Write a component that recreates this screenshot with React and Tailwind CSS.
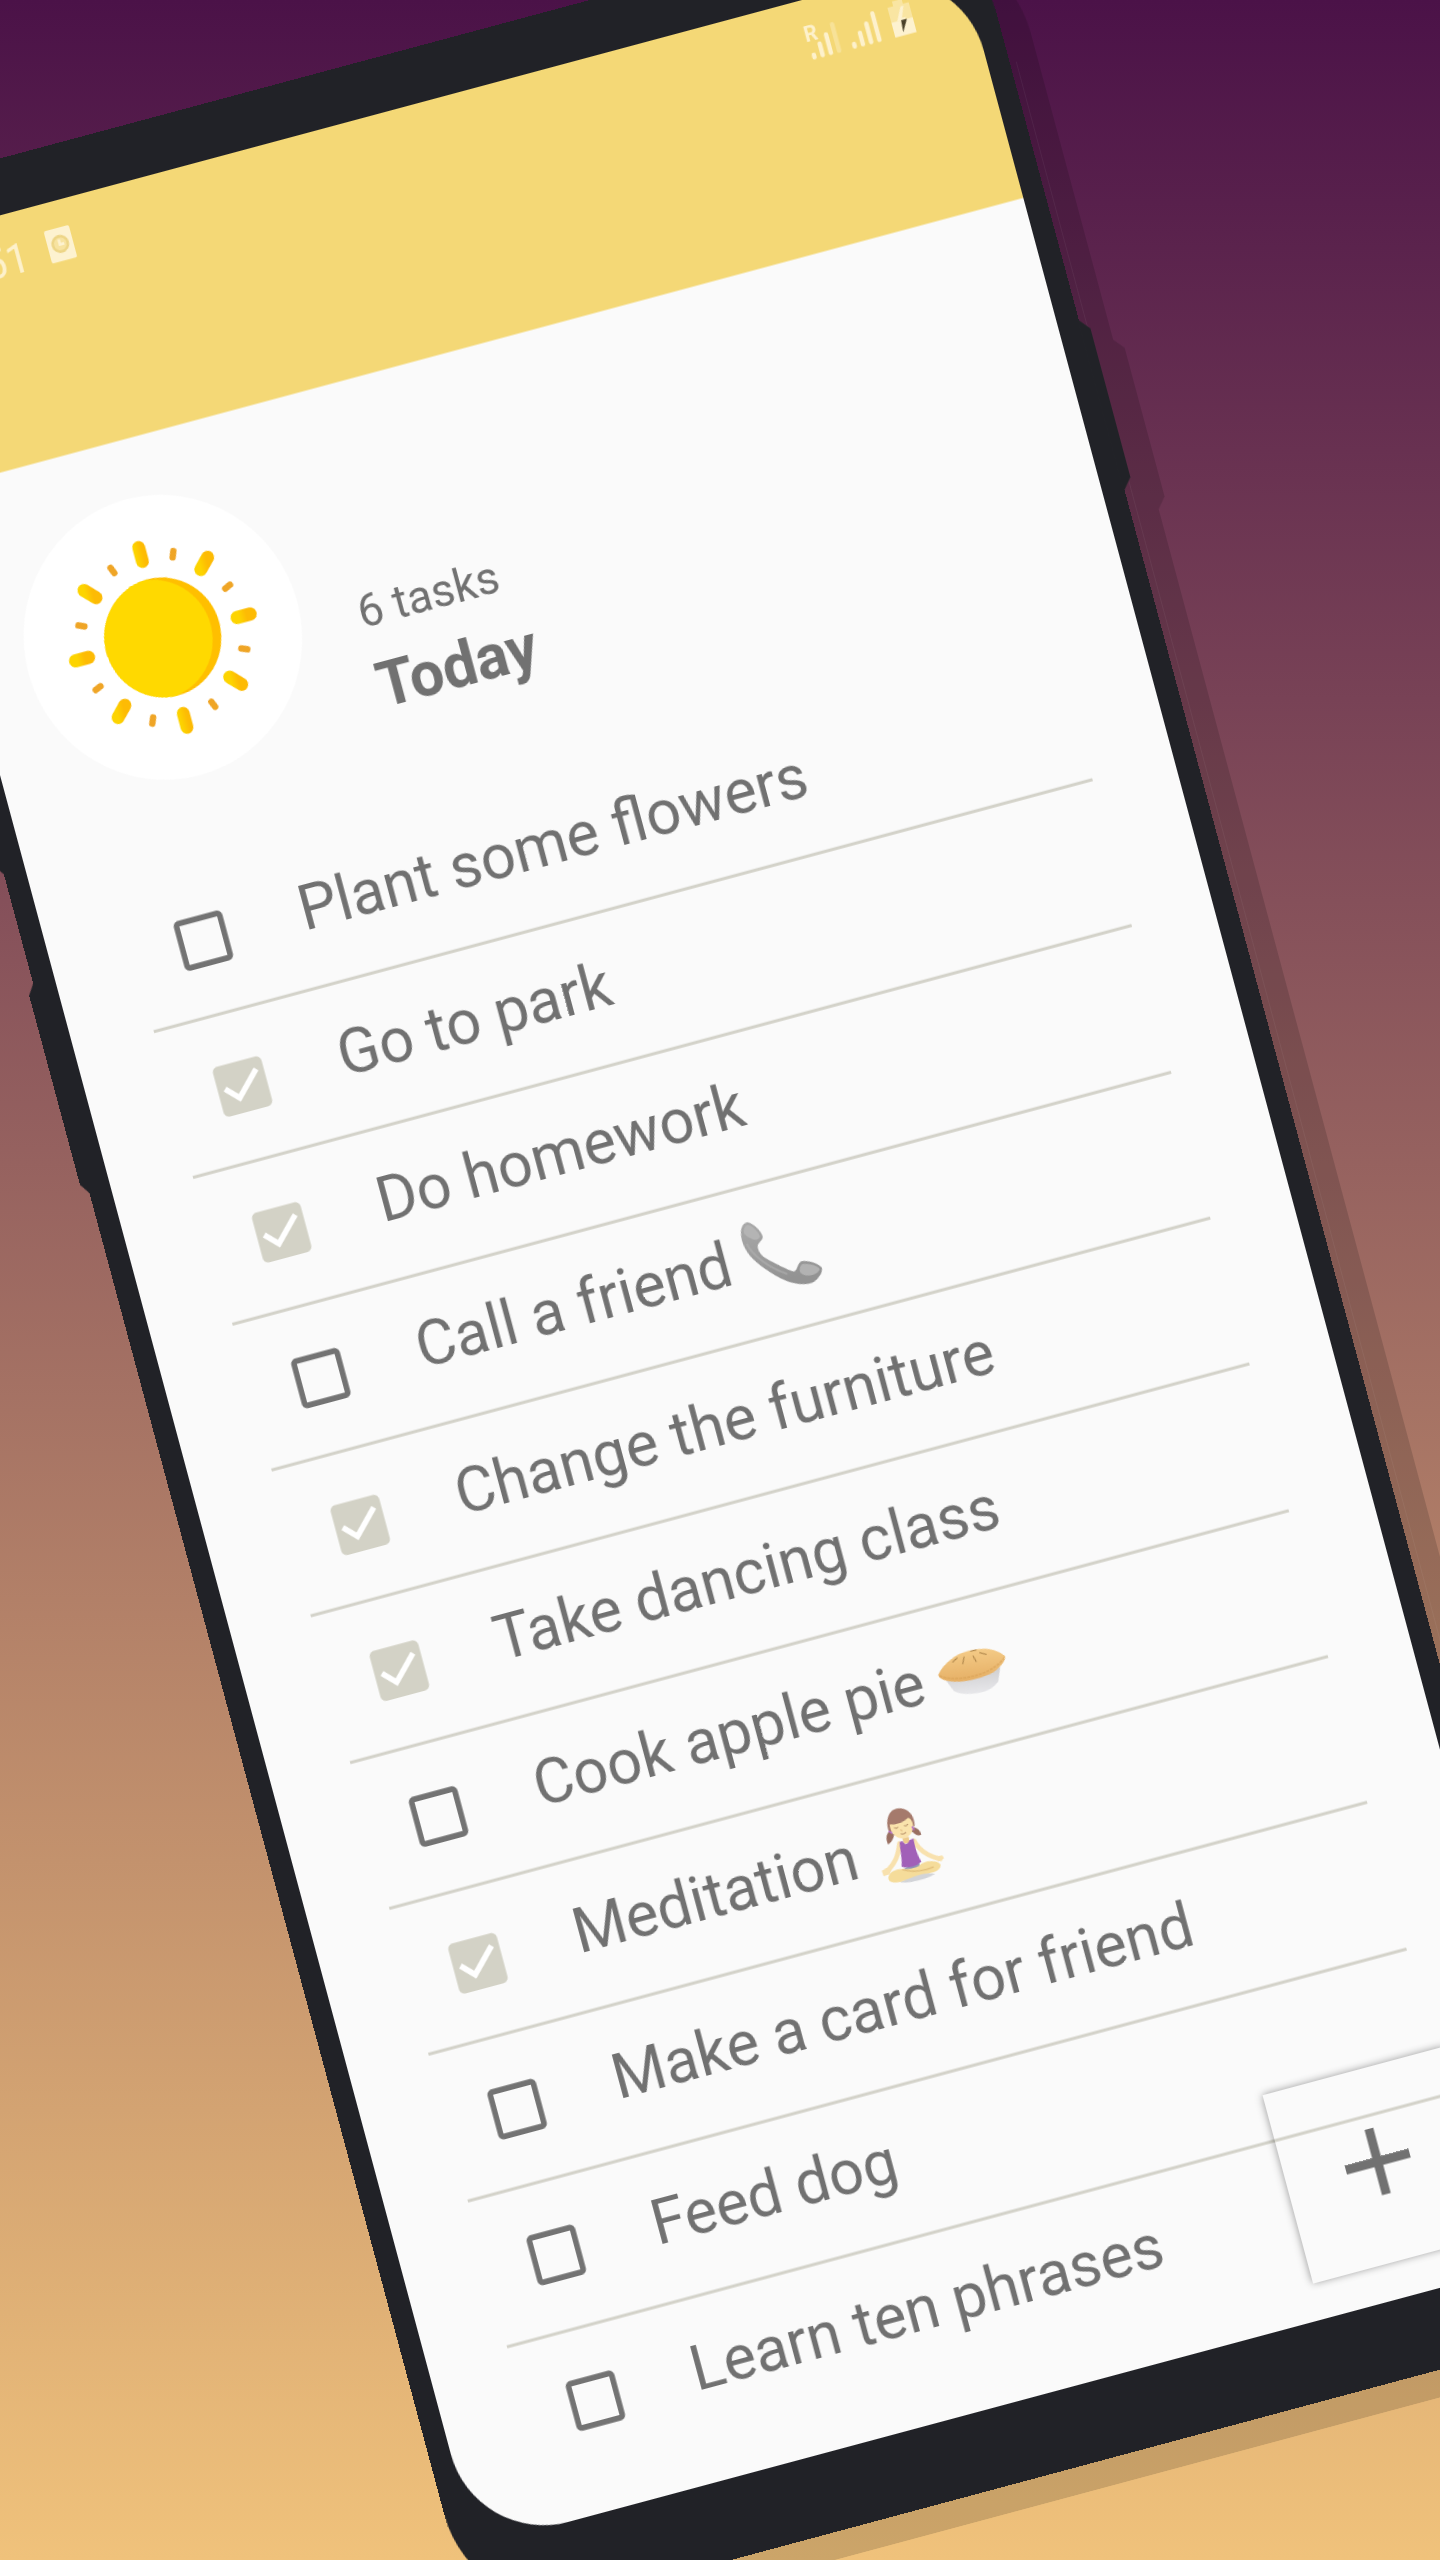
const tasks = [
  { label: 'Plant some flowers', done: false },
  { label: 'Go to park', done: true },
  { label: 'Do homework', done: true },
  { label: 'Call a friend', done: false, emoji: 'phone' },
  { label: 'Change the furniture', done: true },
  { label: 'Take dancing class', done: true },
  { label: 'Cook apple pie', done: false, emoji: 'pie' },
  { label: 'Meditation', done: true, emoji: 'yoga' },
  { label: 'Make a card for friend', done: false },
  { label: 'Feed dog', done: false },
  { label: 'Learn ten phrases', done: false },
];

function PhoneEmoji() {
  return (
    <svg viewBox="0 0 300 300" className="ml-[2px] h-[100px] w-[100px] shrink-0 rotate-[15deg]">
      <defs>
        <linearGradient id="handset" x1="0" y1="0" x2="0.3" y2="1">
          <stop offset="0" stopColor="#a9a9a9" />
          <stop offset="1" stopColor="#939393" />
        </linearGradient>
      </defs>
      <path
        d="M27 84C28 66 38 54 50 56C66 60 91 84 92 98C92 108 78 114 77 124C76 134 84 150 100 160C120 172 166 194 182 198C196 200 194 176 206 169C222 163 262 174 269 188C271 202 258 222 240 231C220 238 186 236 160 225C126 212 78 180 55 155C36 132 26 108 27 84Z"
        fill="url(#handset)"
      />
      <path d="M35 82C37 68 44 62 52 64C64 69 82 86 84 97C82 105 70 110 60 104C46 98 36 92 35 82Z" fill="#b4b4b4" />
      <path d="M202 194C203 182 207 176 216 176C232 175 254 180 262 190C260 202 240 212 222 210C210 208 202 202 202 194Z" fill="#b2b2b2" />
      <path d="M44 118C60 152 110 188 165 206" fill="none" stroke="#b0b0b0" strokeWidth="6" opacity=".6" />
    </svg>
  );
}

function PieEmoji() {
  return (
    <svg viewBox="0 0 270 270" className="ml-[3px] h-[90px] w-[90px] shrink-0 translate-y-[-3px] rotate-[15deg]">
      <defs>
        <linearGradient id="tin" x1="0" y1="0" x2="0.2" y2="1">
          <stop offset="0" stopColor="#c9c9cb" />
          <stop offset="1" stopColor="#e6e6e9" />
        </linearGradient>
        <linearGradient id="crust" x1="0" y1="0" x2="0.2" y2="1">
          <stop offset="0" stopColor="#f6cf8c" />
          <stop offset="1" stopColor="#e6b066" />
        </linearGradient>
      </defs>
      <path d="M62 164L84 193C100 205 145 205 178 194C200 186 214 172 218 164L224 122Z" fill="url(#tin)" />
      <path
        d="M38 147C44 132 66 104 100 86C130 72 165 67 190 70C212 73 234 84 239 92C240 104 226 122 205 137C180 151 140 163 105 166C75 168 42 164 38 147Z"
        fill="url(#crust)"
      />
      <path d="M42 150C80 166 150 154 190 133C212 121 228 108 237 94" fill="none" stroke="#d9a256" strokeWidth="5" strokeDasharray="9 3" opacity=".6" />
      <g fill="none" stroke="#b38a4e" strokeWidth="3.5" strokeLinecap="round">
        <path d="M95 97L82 109" />
        <path d="M116 94L112 114" />
        <path d="M143 91L152 107" />
        <path d="M163 81L182 86" />
        <path d="M136 77L152 73" />
      </g>
    </svg>
  );
}

function YogaEmoji() {
  return (
    <svg viewBox="0 0 270 270" className="ml-[16px] h-[90px] w-[90px] shrink-0 translate-y-[-1px] rotate-[15deg]">
      <path d="M85 247C110 252 170 236 190 222L140 218Z" fill="#d2d4d8" />
      <path d="M98 206L142 190L150 214L110 222Z" fill="#8f9bb5" />
      <g fill="none" stroke="#f8e1ae" strokeLinecap="round" strokeLinejoin="round">
        <path d="M84 134C80 165 74 190 44 217" strokeWidth="14" />
        <path d="M128 126C142 152 164 170 206 178" strokeWidth="14" />
      </g>
      <path d="M30 214L44 206L60 210L54 224L36 230Z" fill="#f8e1ae" />
      <path d="M190 172L212 168L217 176L200 186Z" fill="#f8e1ae" />
      <path d="M50 238C48 222 66 208 92 208C116 210 140 204 150 192C168 182 196 182 206 194C210 208 190 219 160 222C130 226 110 238 86 246C66 250 54 248 50 238Z" fill="#f5dc9a" />
      <path d="M92 210C120 218 150 216 186 202" fill="none" stroke="#e3c07c" strokeWidth="4" />
      <path d="M92 118L112 114L114 132L98 134Z" fill="#eecb8c" />
      <path d="M84 130L93 126C98 138 110 138 114 124L126 119C130 145 136 165 149 186C134 202 112 206 90 202C92 178 86 156 84 130Z" fill="#a160b8" />
      <path d="M48 68C50 42 68 28 90 31C112 34 126 50 129 72L130 82L54 102C48 90 47 78 48 68Z" fill="#a57a6c" />
      <path d="M55 78C72 80 98 72 110 58C122 62 128 78 124 94C118 112 102 120 86 118C68 114 56 98 55 78Z" fill="#fae3ac" />
      <path d="M54 98C44 106 42 122 50 137C60 130 66 120 68 108Z" fill="#996f61" />
      <path d="M124 86C136 86 148 96 149 108C140 112 130 108 122 98Z" fill="#996f61" />
      <path d="M52 98L62 104M122 84L128 94" stroke="#b66fc8" strokeWidth="5" />
      <path d="M68 88Q75 92 80 86M98 82Q105 84 110 77M88 106Q98 108 104 101" fill="none" stroke="#a9805c" strokeWidth="2.5" />
      <path d="M88 93L92 98" stroke="#dcb178" strokeWidth="3" />
    </svg>
  );
}

const emojis = { phone: PhoneEmoji, pie: PieEmoji, yoga: YogaEmoji };

function Checkbox({ done }) {
  return (
    <svg viewBox="0 0 24 24" className="h-[67px] w-[67px] shrink-0">
      {done ? (
        <>
          <rect x="4" y="4" width="16" height="16" fill="#ffffff" />
          <path
            fill="#d3d2c6"
            d="M19 3H5c-1.11 0-2 .9-2 2v14c0 1.1.89 2 2 2h14c1.11 0 2-.9 2-2V5c0-1.1-.89-2-2-2zm-9 14l-5-5 1.41-1.41L10 14.17l7.59-7.59L19 8l-9 9z"
          />
        </>
      ) : (
        <path fill="#737373" d="M19 5v14H5V5h14m0-2H5c-1.1 0-2 .9-2 2v14c0 1.1.9 2 2 2h14c1.1 0 2-.9 2-2V5c0-1.1-.9-2-2-2z" />
      )}
    </svg>
  );
}

function TaskRow({ task, last }) {
  const Emoji = task.emoji ? emojis[task.emoji] : null;
  return (
    <li
      className={
        last
          ? 'flex h-[147.3px] items-center border-b-[3px] border-transparent pl-[38px]'
          : 'flex h-[147.3px] items-center border-b-[3px] border-[#d3d2c9] pl-[38px]'
      }
    >
      <Checkbox done={task.done} />
      <span className="ml-[67px] whitespace-nowrap pb-[9px] text-[61.3px] leading-[72px] text-[#717171]">{task.label}</span>
      {Emoji && <Emoji />}
    </li>
  );
}

const largeRays = [0, 45, 90, 135, 180, 225, 270, 315];
const smallRays = [22.5, 67.5, 112.5, 157.5, 202.5, 247.5, 292.5, 337.5];

function Sun() {
  return (
    <svg viewBox="-100 -100 200 200" className="h-[198px] w-[198px]">
      <defs>
        <linearGradient id="ray" gradientUnits="userSpaceOnUse" x1="-12" y1="0" x2="12" y2="0">
          <stop offset="0.3" stopColor="#fdd400" />
          <stop offset="0.62" stopColor="#fdbb04" />
        </linearGradient>
        <clipPath id="disc">
          <circle r="59" />
        </clipPath>
      </defs>
      <circle r="59" fill="#ffbf00" />
      <circle r="59" cx="-9" fill="#ffd900" clipPath="url(#disc)" />
      <path d="M-59 0A59 59 0 0 1 0 -59V59A59 59 0 0 1 -59 0Z" fill="#ffd900" />
      {largeRays.map((a) => {
        const x = Math.sin((a * Math.PI) / 180);
        const y = -Math.cos((a * Math.PI) / 180);
        return (
          <g key={a} transform={`translate(${x * 84.5} ${y * 84.5})`}>
            <line x1={-x * 7 - 0.01} y1={-y * 7 - 0.01} x2={x * 7} y2={y * 7} stroke="url(#ray)" strokeWidth="13" strokeLinecap="round" />
          </g>
        );
      })}
      {smallRays.map((a) => (
        <rect key={a} x="-3.2" y="-89" width="6.4" height="12.5" rx="3" fill="#efa526" transform={`rotate(${a})`} />
      ))}
    </svg>
  );
}

function DeviceShape() {
  return (
    <div className="relative h-[2508.7px] w-[1182px]">
      <div className="h-full w-full rounded-[118px] bg-current" />
      <div className="absolute left-[1181px] top-[435px] h-[178px] w-[10px] bg-current [clip-path:polygon(0_0,100%_12px,100%_166px,0_100%)]" />
      <div className="absolute left-[-7px] top-[480px] h-[214px] w-[8px] bg-current [clip-path:polygon(100%_0,0_12px,0_202px,100%_100%)]" />
      <div className="absolute left-[-7px] top-[804px] h-[220px] w-[8px] bg-current [clip-path:polygon(100%_0,0_12px,0_208px,100%_100%)]" />
    </div>
  );
}

function StatusBar() {
  return (
    <div className="flex h-[242.4px] items-start justify-between bg-[#f4d876] pl-[60px] pr-[60px] pt-[22px] text-[#fdf1cc]">
      <div className="flex items-center gap-[26px]">
        <span className="w-[97px] text-right text-[41px] leading-[46px]">12:51</span>
        <svg viewBox="0 0 26 33" className="mt-[-6px] h-[33px] w-[26px]">
          <rect width="26" height="33" rx="2.5" fill="#fdf2d0" />
          <circle cx="13" cy="16" r="7.6" fill="#f7e3a0" stroke="#edd586" strokeWidth="2.6" />
          <path d="M12.5 11.5V16.5H17" fill="none" stroke="#fdf2d0" strokeWidth="2.6" />
        </svg>
      </div>
      <svg viewBox="0 0 110 42" className="h-[42px] w-[110px] overflow-visible">
        <text x="0.5" y="18.5" fontSize="21" fontWeight="700" fill="currentColor" fontFamily="Roboto, sans-serif">R</text>
        <g stroke="currentColor" strokeWidth="4.4" strokeLinecap="round">
          <path d="M4.8 35V32.5M13.3 35V23.5M21.8 35V16.5" />
          <path d="M30.3 35V8.5" opacity=".4" />
          <path d="M46.5 35V32.5M55 35V23.5M63.5 35V16.5M72 35V8.5" />
        </g>
        <path d="M94 2H104V7H110V22H88V7H94Z" fill="#f9e5a2" />
        <path d="M88 22H110V37H88Z" fill="#fdf2d0" />
        <path d="M101 9L94 22H98L96 25L104 20H99.5L104 9Z" fill="#fdf2d0" />
        <path d="M98 22H104L97 34Z" fill="#4a4128" />
      </svg>
    </div>
  );
}

function Screen() {
  return (
    <div className="relative h-[2313.4px] w-[1138px] origin-top-left scale-y-[1.027] bg-[#fafafa]">
      <StatusBar />
      <div className="flex pl-[54px] pt-[56.7px]">
        <div className="flex h-[277.6px] w-[277.6px] items-center justify-center rounded-full bg-white">
          <Sun />
        </div>
        <div className="ml-[56px] flex flex-col gap-[15px] pt-[140px] text-[#717171]">
          <p className="text-[45px] leading-[52px]">6 tasks</p>
          <h1 className="text-[60.8px] font-bold leading-[68px]">Today</h1>
        </div>
      </div>
      <ul className="ml-[81.6px] mt-[84.2px] w-[972.5px]">
        {tasks.map((task, i) => (
          <TaskRow key={task.label} task={task} last={i === tasks.length - 1} />
        ))}
      </ul>
      <button
        aria-label="Add task"
        className="absolute left-[877px] top-[2086.6px] flex h-[190px] w-[188px] items-center justify-center shadow-[0_0_8px_rgba(0,0,0,0.42)]"
      >
        <svg viewBox="0 0 66 66" className="mt-[-8px] h-[66px] w-[66px]">
          <path d="M33 0V66M0 33H66" stroke="#717171" strokeWidth="9" />
        </svg>
      </button>
    </div>
  );
}

export default function App() {
  return (
    <div className="h-[2560px] w-[1440px] overflow-hidden bg-linear-to-b/srgb from-[#4b1248] to-[#f0c27b] font-['Roboto',sans-serif]">
      <div className="relative ml-[-223px] flex h-[3000px] w-[2000px] origin-[223px_0px] rotate-[-15.03deg] items-start pt-[153px]">
        <div className="absolute left-[28px] top-[180.5px] text-black opacity-15">
          <DeviceShape />
        </div>
        <div className="absolute left-[1188px] top-[323px] h-[1900px] w-px bg-white/5" />
        <div className="relative text-[#212227]">
          <DeviceShape />
          <div className="absolute left-[22.3px] top-[54.5px] h-[2375.9px] w-[1138px] overflow-hidden rounded-[96px]">
            <Screen />
          </div>
        </div>
      </div>
    </div>
  );
}
